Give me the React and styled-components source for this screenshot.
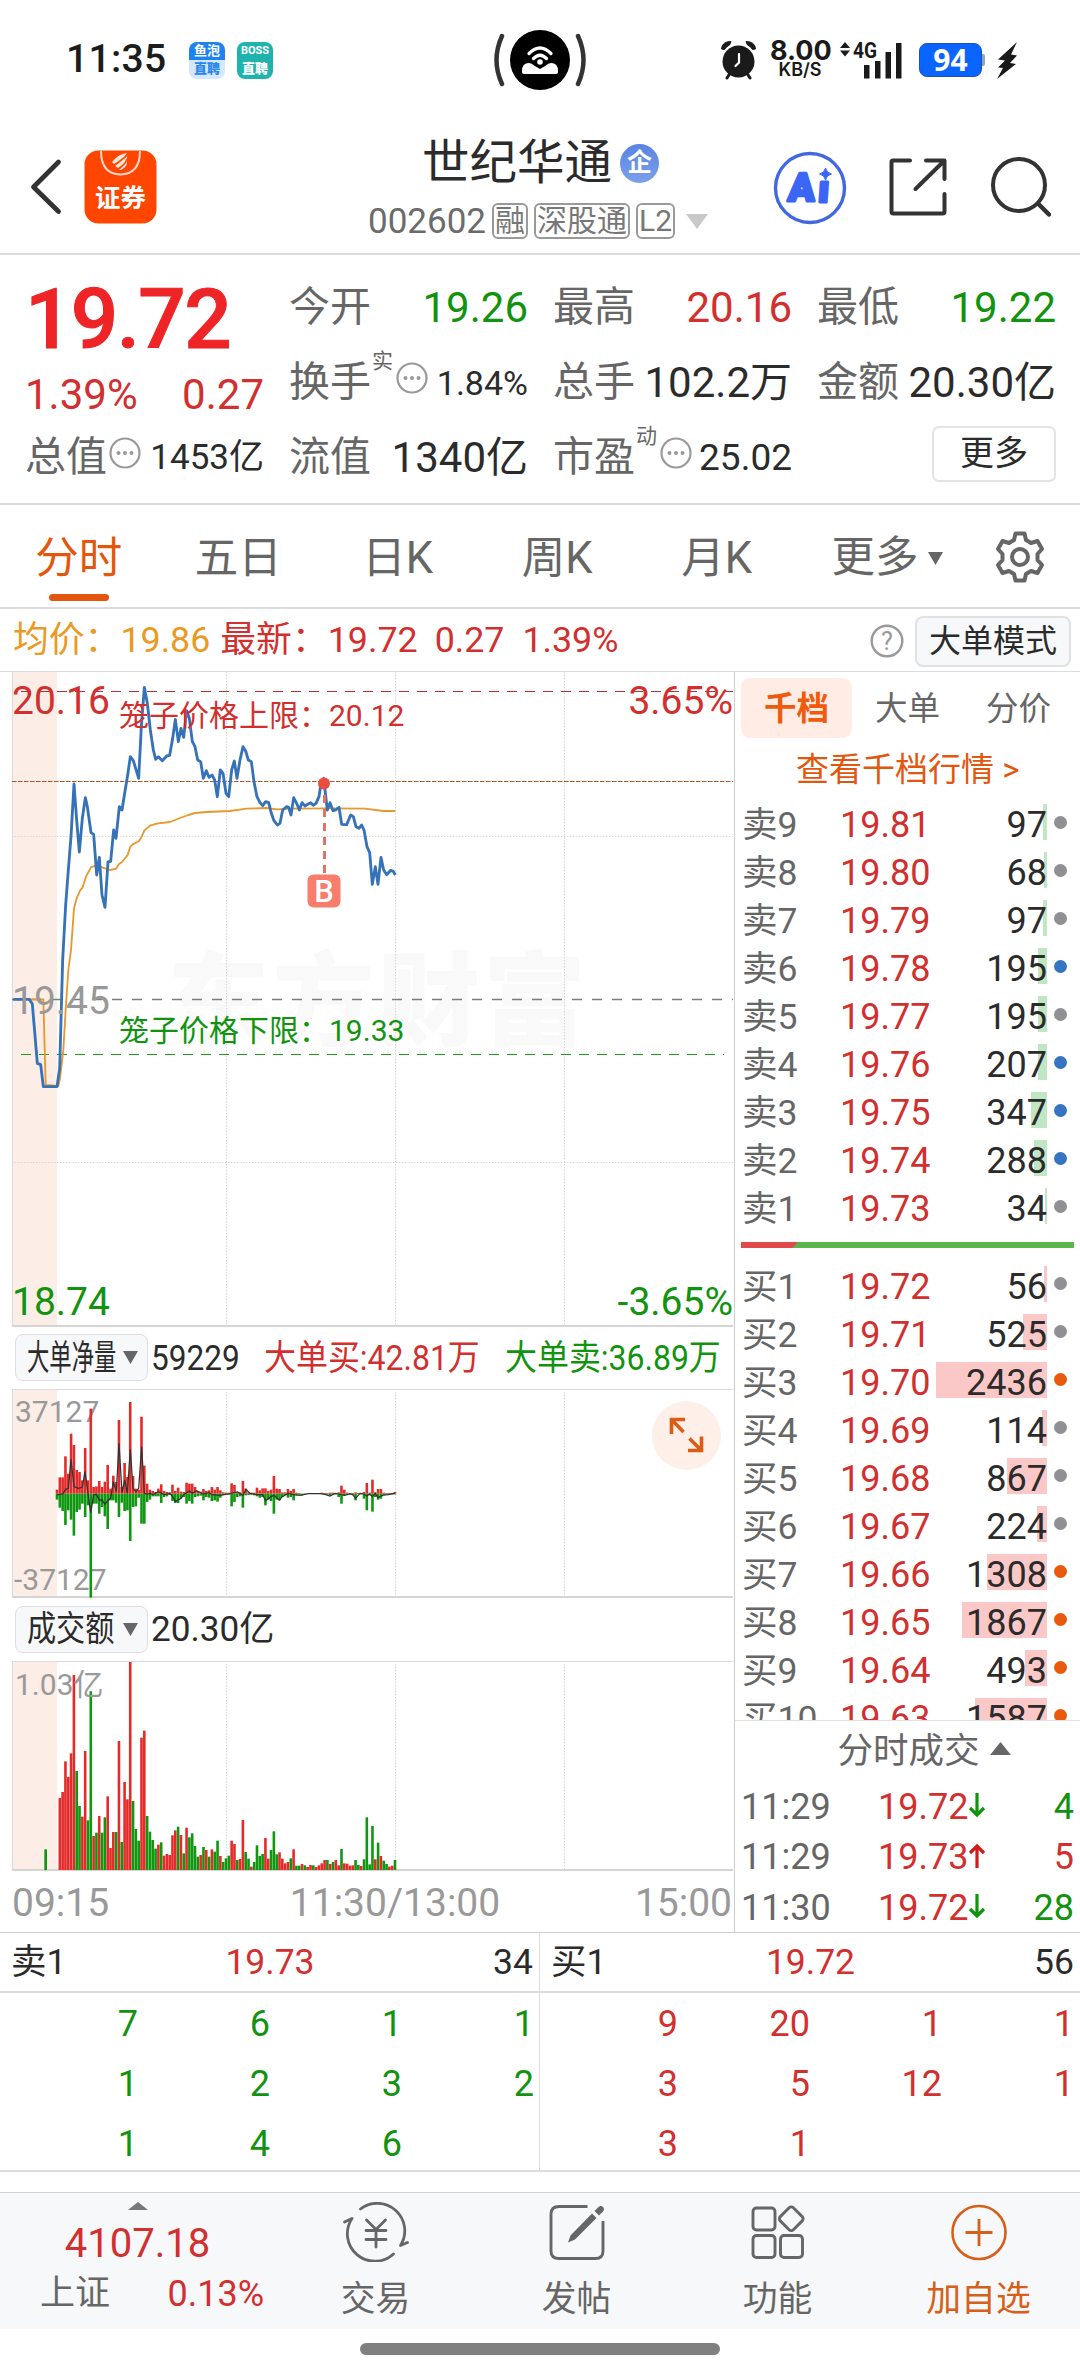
import React from 'react'
import styled, {createGlobalStyle} from "styled-components";

const RED = '#d22f2f';
const GREEN = '#12930f';
const GRAY = '#666';
const DARK = '#2b2b2b';
const ORANGE = '#e2570d';
const LINE = '#dcdcdc';

const GlobalStyle = createGlobalStyle`
    body{
      margin: 0;
      background-color: #fff;
      font-family: Roboto, "Noto Sans CJK SC", sans-serif;
      color: ${DARK};
    }
    *{
      box-sizing: border-box;
    }
    svg{
      display: block;
      flex: none;
    }
    svg text{
      font-family: Roboto, "Noto Sans CJK SC", sans-serif;
    }
`;

const Page = styled.div`
    width: 1080px;
    height: 2376px;
    overflow: hidden;
    display: flex;
    flex-flow: column nowrap;
    white-space: nowrap;
    line-height: 1;
`;

/* ---------- status bar ---------- */

const StatusBar = styled.div`
    height: 120px;
    flex: none;
    display: grid;
    grid-template-columns: 1fr auto 1fr;
    align-items: center;
    padding: 0 62px 0 62px;
`;
const StatusSide = styled.div`
    display: flex;
    align-items: center;
    justify-content: ${({end}) => end ? 'flex-end' : 'flex-start'};
`;
const Clock = styled.div`
    font-size: 39px;
    font-weight: 500;
    color: #1c1c1c;
    width: 123px;
    letter-spacing: 0.3px;
    margin: -2px 0 0 4px;
`;
const AppBadge = styled.div`
    width: 36px;
    height: 37px;
    border-radius: 8px;
    margin-right: 12px;
    background: ${({bg}) => bg};
    display: flex;
    flex-flow: column;
    align-items: center;
    justify-content: center;
    font-weight: 700;
    line-height: 18px;
    span{
      font-size: ${({top}) => top}px;
      color: #fff;
      height: 18px;
    }
    b{
      font-size: 13px;
      color: ${({fg}) => fg};
      height: 18px;
    }
`;
const Speed = styled.div`
    width: 60px;
    margin: -3px 10px 0 12px;
    font-family: Inter, sans-serif;
    text-align: center;
    font-weight: 700;
    color: #1a1a1a;
    div{
      font-size: 27px;
      line-height: 24px;
      height: 22px;
    }
    span{
      display: block;
      font-size: 18px;
      line-height: 18px;
      font-weight: 600;
    }
`;
const Battery = styled.div`
    width: 63px;
    height: 34px;
    margin: 0 3px 0 17px;
    border-radius: 8px;
    background-color: #0a64ff;
    border: 1px solid #1d52b5;
    color: #fff;
    font: 700 30px/31px "Noto Sans", sans-serif;
    text-align: center;
    position: relative;
    &:after{
      content: '';
      position: absolute;
      right: -4px;
      top: 10px;
      width: 3px;
      height: 12px;
      border-radius: 0 2px 2px 0;
      background-color: #8fa3c9;
    }
`;

/* ---------- header ---------- */

const Header = styled.div`
    height: 135px;
    flex: none;
    border-bottom: 2px solid ${LINE};
    display: flex;
    padding: 19px 29px 0 30px;
`;
const HeaderLeft = styled.div`
    display: flex;
    width: 336px;
    gap: 22px;
    padding-top: 11px;
`;
const HeaderTitle = styled.div`
    flex: 1;
`;
const TitleLine = styled.div`
    display: flex;
    align-items: center;
    font-size: 47.5px;
    line-height: 50px;
    height: 48px;
    padding-left: 56px;
`;
const Verified = styled.div`
    width: 39px;
    height: 39px;
    margin-left: 8px;
    border-radius: 50%;
    background: linear-gradient(#5a84e2, #7ba0ea);
    color: #fff;
    font-size: 25px;
    font-weight: 700;
    line-height: 37px;
    text-align: center;
`;
const CodeLine = styled.div`
    display: flex;
    align-items: center;
    height: 36px;
    margin-top: 16px;
    font-size: 35px;
    color: #6b6b6b;
    gap: 6px;
    padding-left: 2px;
`;
const Tag = styled.span`
    height: 36px;
    padding: 0 1px;
    border: 2px solid #999;
    border-radius: 6px;
    font-size: 30px;
    line-height: 32px;
    color: #777;
`;
const HeaderIcons = styled.div`
    display: flex;
    gap: 41px;
    padding-top: 12px;
`;

/* ---------- summary ---------- */

const Summary = styled.div`
    height: 250px;
    flex: none;
    border-bottom: 2px solid ${LINE};
    padding: 15px 23px 0 25px;
    display: grid;
    grid-template-columns: repeat(4, 239px);
    grid-template-rows: repeat(3, 75px);
    column-gap: 25px;
`;
const Cell = styled.div`
    display: flex;
    align-items: center;
    padding-top: ${({drop}) => drop || 0}px;
`;
const Label = styled.span`
    font-size: 41px;
    color: ${GRAY};
`;
const Sup = styled.span`
    align-self: flex-start;
    margin-top: 6px;
    font-size: 21px;
    color: ${GRAY};
    width: 23px;
    padding-left: 1px;
`;
const DotsIcon = styled.svg`
    margin: -10px 0 0 2px;
`;
const Value = styled.span`
    margin-left: ${({first}) => first ? '0' : 'auto'};
    font-size: ${({size}) => size || 42}px;
    color: ${({color}) => color || DARK};
`;
const BigPrice = styled.span`
    font-size: 83.5px;
    font-weight: 500;
    color: #ee2426;
    letter-spacing: -1.6px;
    -webkit-text-stroke: 1px #ee2426;
`;
const MoreButton = styled.div`
    margin-left: auto;
    width: 124px;
    height: 56px;
    margin-top: -7px;
    border: 2px solid #e4e4e4;
    border-radius: 7px;
    font-size: 34px;
    line-height: 51px;
    text-align: center;
`;

/* ---------- period tabs ---------- */

const Tabs = styled.div`
    height: 104px;
    flex: none;
    border-bottom: 2px solid ${LINE};
    display: flex;
    padding-right: 34px;
`;
const Tab = styled.div`
    width: 159.5px;
    height: 102px;
    display: flex;
    flex-flow: column;
    align-items: center;
    font-size: 43.5px;
    line-height: 107px;
    padding-right: 2px;
    color: ${({active}) => active ? ORANGE : GRAY};
    &:after{
      content: '';
      width: 60px;
      height: 7px;
      margin-top: -18px;
      border-radius: 4px;
      background-color: ${({active}) => active ? ORANGE : 'transparent'};
    }
`;
const MoreTab = styled.div`
    display: flex;
    align-items: center;
    gap: 9px;
    margin-left: 34px;
    font-size: 43.5px;
    color: ${GRAY};
    height: 106px;
`;
const GearBox = styled.div`
    margin-left: auto;
    padding-top: 25px;
`;

/* ---------- price line above chart ---------- */

const InfoBar = styled.div`
    height: 63px;
    flex: none;
    border-bottom: 1px solid ${LINE};
    display: flex;
    align-items: center;
    padding: 2px 9px 0 13px;
    font-size: 35.8px;
    color: ${RED};
`;
const InfoText = styled.span`
    margin-right: ${({gap}) => gap}px;
    color: ${({color}) => color || RED};
`;
const ModeButton = styled.div`
    width: 156px;
    height: 51px;
    margin-left: 11px;
    border: 2px solid #dfe1e5;
    border-radius: 8px;
    background-color: #f7f8fa;
    color: ${DARK};
    font-size: 32px;
    line-height: 47px;
    text-align: center;
`;

/* ---------- main area ---------- */

const Main = styled.div`
    height: 1261px;
    flex: none;
    display: flex;
    border-bottom: 1px solid #cfcfcf;
`;
const ChartSide = styled.div`
    width: 735px;
    border-right: 1px solid #cfcfcf;
`;
const Toolbar = styled.div`
    height: ${({height}) => height}px;
    display: flex;
    align-items: center;
    padding: 0 0 1px 15px;
`;
const Select = styled.div`
    width: 133px;
    height: 47px;
    border: 1px solid #dcdfe6;
    border-radius: 8px;
    background-color: #f7f8fa;
    display: flex;
    align-items: center;
    gap: 8px;
    padding-left: 11px;
    margin-right: 3px;
`;
/* text that is narrowed to fit a fixed slot */
const Fit = styled.span`
    display: block;
    width: ${({width}) => width}px;
    font-size: 35.5px;
    height: 40px;
    line-height: 41px;
    color: ${({color}) => color || DARK};
    transform: scaleX(${({scale}) => scale});
    transform-origin: left center;
`;
const TimeAxis = styled.div`
    height: 61px;
    display: grid;
    grid-template-columns: 1fr auto 1fr;
    align-items: center;
    padding: 3px 2px 0 12px;
    font-size: 39px;
    color: #999;
    span:last-child{
      text-align: right;
    }
    span:nth-child(2){
      padding-left: 46px;
    }
`;

/* ---------- order book ---------- */

const Book = styled.div`
    width: 345px;
    display: flex;
    flex-flow: column;
`;
const BookTabs = styled.div`
    display: flex;
    padding: 6px 6px 0;
`;
const BookTab = styled.div`
    flex: 1;
    height: 60px;
    border-radius: 9px;
    font-size: 32.5px;
    line-height: 62px;
    text-align: center;
    font-weight: ${({active}) => active ? 700 : 400};
    color: ${({active}) => active ? '#f05a0e' : GRAY};
    background-color: ${({active}) => active ? '#ffece4' : 'transparent'};
`;
const BookLink = styled.div`
    height: 62px;
    padding-left: 61px;
    font-size: 33px;
    line-height: 63px;
    color: ${ORANGE};
`;
const BookRow = styled.div`
    height: 48px;
    display: flex;
    align-items: center;
    padding-left: 7px;
    font-size: 36px;
    line-height: 48px;
`;
const Level = styled.span`
    width: 98px;
    padding-top: 2px;
    font-size: 35.5px;
    color: ${GRAY};
`;
const Price = styled.span`
    color: ${RED};
    width: 96px;
    padding-top: 2px;
`;
const Volume = styled.span`
    width: 111px;
    height: 48px;
    line-height: 50px;
    text-align: right;
    background: linear-gradient(${({tint}) => tint}, ${({tint}) => tint}) right 4px / ${({bar}) => bar}px 36px no-repeat;
`;
const Dot = styled.i`
    width: 13px;
    height: 13px;
    border-radius: 50%;
    margin: -4px 0 0 7px;
    background-color: ${({color}) => color};
`;
const Ratio = styled.div`
    height: 6px;
    margin: 10px 6px 14px;
    background: linear-gradient(135deg, #e04a4b 40px, #5bb54b 41px);
`;
const Bids = styled.div`
    height: 460px;
    overflow: hidden;
    border-bottom: 1px solid #e2e2e2;
`;
const TradesTitle = styled.div`
    height: 60px;
    display: flex;
    align-items: center;
    justify-content: center;
    gap: 10px;
    padding: 2px 0 0 33px;
    font-size: 35.5px;
    color: ${GRAY};
    svg{
      margin-top: -6px;
    }
`;
const Trade = styled.div`
    height: 50.7px;
    display: flex;
    align-items: center;
    padding: 2px 6px 0 6px;
    font-size: 36px;
    color: ${GRAY};
    svg{
      margin-top: -3px;
    }
`;
const TradeTime = styled.span`
    width: 137px;
`;
const TradePrice = styled.span`
    width: 90px;
    color: ${RED};
`;
const TradeSize = styled.span`
    margin-left: auto;
    color: ${({color}) => color};
`;

/* ---------- queue ---------- */

const Queue = styled.div`
    display: flex;
    height: 239px;
    flex: none;
    border-bottom: 2px solid ${LINE};
`;
const QueueSide = styled.div`
    width: 540px;
    border-right: ${({divider}) => divider ? '1px solid ' + LINE : 'none'};
`;
const QueueHead = styled.div`
    height: 60px;
    border-bottom: 2px solid ${LINE};
    display: grid;
    grid-template-columns: 1fr auto 1fr;
    align-items: center;
    padding: 2px 6px 0 11px;
    font-size: 35.5px;
    b{
      font-weight: 400;
      color: ${RED};
      padding-right: 4px;
    }
    span:last-child{
      text-align: right;
    }
`;
const QueueGrid = styled.div`
    display: grid;
    grid-template-columns: 138px 132px 132px 132px;
    grid-auto-rows: 60px;
    align-items: center;
    text-align: right;
    padding-top: 1px;
    font-size: 36px;
    color: ${({color}) => color};
`;

/* ---------- bottom nav ---------- */

const Nav = styled.div`
    height: 137px;
    flex: none;
    margin-top: 20px;
    border-top: 1px solid #cfd2d5;
    background-color: #f7f8fa;
    display: flex;
`;
const IndexBox = styled.div`
    width: 275px;
    display: flex;
    flex-flow: column;
    align-items: center;
    padding-top: 9px;
`;
const IndexValue = styled.div`
    font-size: 40px;
    line-height: 40px;
    margin-top: 14px;
    color: ${RED};
`;
const IndexRow = styled.div`
    width: 275px;
    margin-top: 12px;
    padding: 0 11px 0 40px;
    display: flex;
    justify-content: space-between;
    font-size: 35px;
    line-height: 36px;
    color: ${GRAY};
    span{
      color: ${RED};
      font-size: 36px;
    }
`;
const NavItem = styled.div`
    width: 201px;
    display: flex;
    flex-flow: column;
    align-items: center;
    padding-top: 9px;
    gap: 20px;
    font-size: 34.8px;
    color: ${({active}) => active ? '#d65f1a' : GRAY};
`;
const HomeBar = styled.div`
    width: 360px;
    height: 12px;
    margin: 14px auto 0;
    border-radius: 6px;
    background-color: #808080;
`;

/* ---------- data ---------- */

// chart drawings share one scale: 3 units per pixel
const STEP = 8.45;
const START = 171;

const PRICE = `40,1048 88,1048 97,1062 112,1240 122,1244 130,1310 171,1310 179,1255 188,930 197,765 205,660 213,560
222,402 230,510 238,606 247,505 256,443 262,470 273,548 281,553 290,675 298,622 306,735 315,772 324,636 332,634
341,540 348,565 358,470 366,480 374,430 383,375 391,320 400,332 416,385 424,230 433,112 442,160 451,240 460,300
467,328 475,320 487,332 500,318 509,316 518,265 526,208 535,275 543,235 551,262 560,182 568,205 577,275 585,290
593,330 602,335 610,385 619,362 627,382 636,375 644,390 652,440 661,360 669,370 678,430 686,440 695,360 703,333
711,385 720,330 729,290 737,303 745,330 754,335 762,395 771,440 780,458 788,467 797,455 806,458 814,490 822,512
832,525 840,520 848,480 860,470 866,472 873,495 881,443 890,460 898,480 906,458 915,468 924,462 932,458 940,466
948,460 957,440 963,400 971,385 982,480 990,458 999,482 1007,480 1017,472 1025,523 1040,524 1052,495 1060,500
1068,530 1077,535 1085,525 1092,540 1101,590 1109,608 1117,703 1126,650 1134,703 1143,622 1151,660 1160,674
1172,661 1180,664 1186,675`;

const AVERAGE = `88,1048 130,1048 137,1305 175,1308 180,1285 190,1200 197,1080 205,960 213,900 222,775 230,745
240,722 248,712 258,680 273,652 283,648 300,650 315,655 330,660 348,656 357,642 366,636 383,615 391,590 400,582
417,573 425,560 433,542 450,527 470,521 510,516 540,504 565,495 585,489 620,486 690,483 740,476 800,474 830,478
870,476 1000,475 1095,476 1150,483 1186,483`;

const NET = `171,525 188,522 197,508 205,505 213,418 222,500 235,505 247,502 255,455 264,520 272,578 281,525
289,523 298,540 306,540 315,553 323,542 332,535 340,485 349,515 357,370 366,518 374,480 382,520 391,388 399,505
408,515 416,505 425,380 433,520 441,522 450,520 460,524 475,515 492,524 509,520 517,528 526,545 543,535 551,524
568,513 577,520 590,512 610,522 627,518 636,524 661,526 685,522 712,516 729,526 738,508 750,520 771,524 788,524
797,542 813,530 822,526 838,540 847,530 864,520 881,524 900,526 925,521 960,521 975,523 990,528 1005,520
1017,522 1033,526 1050,522 1058,524 1067,535 1080,520 1092,522 1100,528 1109,522 1117,530 1126,520 1134,533
1150,525 1165,524 1185,520`;

const BIG_BUY = [12, 49, 49, 112, 60, 180, 146, 71, 65, 40, 137, 40, 255, 20, 22, 38, 20, 36, 86, 15, 54, 35, 221,
    20, 92, 50, 275, 53, 15, 12, 231, 84, 30, 12, 8, 5, 15, 28, 8, 5, 4, 27, 8, 18, 6, 5, 33, 30, 30, 20, 8, 6, 14,
    8, 10, 20, 12, 20, 10, 4, 3, 3, 31, 26, 5, 4, 38, 15, 4, 3, 3, 18, 10, 16, 16, 8, 12, 53, 15, 14, 4, 4, 14, 8,
    14, 3, 2, 0, 0, 0, 0, 0, 0, 0, 3, 2, 2, 3, 3, 2, 4, 24, 12, 3, 2, 2, 4, 2, 2, 5, 32, 3, 42, 4, 14, 14, 3, 2, 2,
    2, 5];
const BIG_SELL = [18, 42, 52, 94, 50, 78, 126, 55, 48, 30, 70, 35, 312, 30, 30, 60, 40, 68, 106, 20, 20, 27, 70,
    27, 52, 50, 142, 40, 38, 12, 90, 90, 25, 18, 8, 8, 8, 28, 10, 8, 4, 22, 28, 28, 14, 10, 30, 22, 30, 10, 8, 6,
    20, 10, 12, 22, 20, 24, 12, 4, 3, 3, 38, 25, 10, 8, 42, 5, 4, 3, 5, 8, 12, 10, 35, 18, 22, 60, 18, 20, 10, 4,
    12, 10, 20, 5, 3, 5, 3, 0, 0, 0, 0, 0, 0, 3, 3, 6, 3, 2, 10, 30, 6, 3, 2, 3, 20, 2, 2, 15, 50, 5, 54, 10, 18,
    15, 3, 2, 2, 2, 2];

// turnover per minute, sign is the direction
const TURNOVER = [0, 216, 234, 326, 279, 350, 585, -297, -192, 160, 357, -149, -536, 102, -112, 162, -112, -158,
    221, 66, 114, -114, 387, -84, 264, 212, 624, -207, -123, -88, 397, 418, -162, -115, -90, -64, 76, -83, 43, 48,
    45, 104, 119, -130, 105, -50, 127, -98, -110, -72, -40, 45, -69, 60, -40, 62, -55, -88, 42, -24, -35, -43, 88,
    78, -30, 33, 150, -54, -34, 10, -24, -74, -42, -48, 96, 34, -60, -116, -47, 53, 34, 20, 24, -35, 62, -13, -13,
    18, -14, 9, 15, -14, 9, 14, 20, 30, -30, 18, -24, 30, 14, -63, 20, 19, 13, 14, -30, -15, 12, -32, -158, -17,
    -132, 32, -82, 42, -28, -18, 10, 13, -30];

const BLUE_DOT = '#3474c0';
const GRAY_DOT = '#8f8f94';
const ORANGE_DOT = '#e8590c';

const asks = [
    ['卖9', '19.81', 97, GRAY_DOT],
    ['卖8', '19.80', 68, GRAY_DOT],
    ['卖7', '19.79', 97, GRAY_DOT],
    ['卖6', '19.78', 195, BLUE_DOT],
    ['卖5', '19.77', 195, GRAY_DOT],
    ['卖4', '19.76', 207, BLUE_DOT],
    ['卖3', '19.75', 347, BLUE_DOT],
    ['卖2', '19.74', 288, BLUE_DOT],
    ['卖1', '19.73', 34, GRAY_DOT],
];
const bids = [
    ['买1', '19.72', 56, GRAY_DOT],
    ['买2', '19.71', 525, GRAY_DOT],
    ['买3', '19.70', 2436, ORANGE_DOT],
    ['买4', '19.69', 114, GRAY_DOT],
    ['买5', '19.68', 867, GRAY_DOT],
    ['买6', '19.67', 224, GRAY_DOT],
    ['买7', '19.66', 1308, ORANGE_DOT],
    ['买8', '19.65', 1867, ORANGE_DOT],
    ['买9', '19.64', 493, ORANGE_DOT],
    ['买10', '19.63', 1587, ORANGE_DOT],
];
const trades = [
    ['11:29', '19.72', false, 4],
    ['11:29', '19.73', true, 5],
    ['11:30', '19.72', false, 28],
];

/* ---------- icons ---------- */

const Triangle = ({w, h, color, up}) => (
    <svg width={w} height={h} viewBox="0 0 10 10" preserveAspectRatio="none">
        <path d={up ? 'M0 10L5 0L10 10Z' : 'M0 0H10L5 10Z'} fill={color}/>
    </svg>
)

const Dots = () => (
    <DotsIcon width="32" height="32" viewBox="0 0 32 32">
        <circle cx="16" cy="16" r="14.500" fill="none" stroke="#999" strokeWidth="2.200"/>
        <circle cx="9.500" cy="16" r="2" fill="#999"/>
        <circle cx="16" cy="16" r="2" fill="#999"/>
        <circle cx="22.500" cy="16" r="2" fill="#999"/>
    </DotsIcon>
)

const CallIsland = () => (
    <svg width="96" height="62" viewBox="-2 0 96 62">
        <path d="M8 7Q-3 31 8 55M84 7Q95 31 84 55" fill="none" stroke="#333" strokeWidth="4.500" strokeLinecap="round"/>
        <circle cx="46" cy="31" r="30" fill="#000"/>
        <path d="M28 42Q28 34 35 34Q38 34 40 36.500L46 40L52 36.500Q54 34 57 34Q64 34 64 42V43Q64 45 62 45H30Q28 45 28 43Z" fill="#fff"/>
        <path d="M35 24.500Q46 13.500 57 24.500M39.500 29.500Q46 23 52.500 29.500" fill="none" stroke="#fff" strokeWidth="3.200" strokeLinecap="round"/>
        <circle cx="46" cy="33" r="2.800" fill="#fff"/>
    </svg>
)

const Alarm = () => (
    <svg width="38" height="40" viewBox="0 0 38 40">
        <circle cx="18.500" cy="21.500" r="16" fill="#1a1a1a"/>
        <path d="M1.500 9Q2 1.500 11 1.500L9.500 5Q6 6.500 4.500 9.500ZM35.500 9Q35 1.500 26 1.500L27.500 5Q31 6.500 32.500 9.500Z" fill="#1a1a1a" stroke="#1a1a1a" strokeLinejoin="round"/>
        <path d="M9.500 34L7 38M27.500 34L30 38" stroke="#1a1a1a" strokeWidth="3" strokeLinecap="round"/>
        <path d="M19 14V22.500L15.500 26" fill="none" stroke="#fff" strokeWidth="2.200" strokeLinecap="round"/>
    </svg>
)

const Signal = () => (
    <svg width="62" height="38" viewBox="0 0 62 38">
        <path d="M0 7L5 1L10 7ZM0 9.500H10L5 15.500Z" fill="#1a1a1a"/>
        <text x="13" y="16.500" fontSize="22" fontWeight="700" textLength="24" lengthAdjust="spacingAndGlyphs" fill="#1a1a1a">4G</text>
        <path d="M24 24H29.500V37.500H24ZM35 20H40.500V37.500H35ZM45.500 11H51V37.500H45.500ZM56 2H61.500V37.500H56Z" fill="#1a1a1a"/>
    </svg>
)

const BoltIcon = styled.svg`
    margin-left: 12px;
`;
const Bolt = () => (
    <BoltIcon width="21" height="37" viewBox="0 0 21 37">
        <path d="M20 0L1 17.500L8 18.500L1 25.500L6 26L0 37L19 22L13 21L20 13.500L14 12.500Z" fill="#1a1a1a"/>
    </BoltIcon>
)

const Brand = () => (
    <svg width="73" height="74" viewBox="0 0 73 74">
        <rect x="0.500" y="0.500" width="72" height="73" rx="14" fill="#ff4600"/>
        <path d="M17 1Q17 24 36.500 24.500Q56 24 56 1" fill="none" stroke="#ffd9c8" strokeWidth="2"/>
        <path d="M28 12Q34 4 43 3Q40 8 30 14ZM31 16Q40 9 43.500 6Q42 13 34 18ZM35 20Q42 14 43 11Q43.500 17 37 20Z" fill="#ffe6da"/>
        <text x="36.500" y="57" fontSize="25.500" fontWeight="700" textAnchor="middle" fill="#fff">证券</text>
    </svg>
)

const AiIcon = () => (
    <svg width="74" height="74" viewBox="0 0 74 74">
        <circle cx="37" cy="37" r="34.500" fill="none" stroke="#4168e0" strokeWidth="3.400"/>
        <g fill="#3b66f5" stroke="#3b66f5" strokeWidth="3" strokeLinejoin="round">
            <text x="15" y="50" fontSize="39" fontWeight="900" transform="skewX(-4) translate(3 0)">A</text>
            <text x="45" y="51" fontSize="38" fontWeight="900" transform="skewX(-4) translate(3 0)">ı</text>
        </g>
        <path d="M52.500 17Q53.500 22 58.500 23Q53.500 24 52.500 29Q51.500 24 46.500 23Q51.500 22 52.500 17Z" fill="#3b66f5" stroke="#3b66f5"/>
    </svg>
)

const HeaderSvg = styled.svg`
    margin-top: ${({top}) => top}px;
`;

const Share = () => (
    <HeaderSvg top={6} width="60" height="60" viewBox="0 0 60 60">
        <g fill="none" stroke="#333" strokeWidth="4" strokeLinecap="round" strokeLinejoin="round">
            <path d="M22 3.500H5Q3.500 3.500 3.500 5V54.500Q3.500 56.500 5.500 56.500H54.500Q56.500 56.500 56.500 54.500V37"/>
            <path d="M38 3.500H56.500V22M55 5L27.500 32"/>
        </g>
    </HeaderSvg>
)

const Search = () => (
    <HeaderSvg top={5} width="62" height="62" viewBox="0 0 62 62">
        <circle cx="30" cy="29" r="26" fill="none" stroke="#333" strokeWidth="4"/>
        <path d="M49.500 48L60 58.500" stroke="#333" strokeWidth="4.500" strokeLinecap="round"/>
    </HeaderSvg>
)

const Gear = () => (
    <svg width="52" height="54" viewBox="0 0 52 54">
        <g fill="none" stroke={GRAY} strokeWidth="4" strokeLinejoin="round">
            <path d="M21.500 3.500H30.500L32 10L37 13L43.500 11L48 19L43.500 24V30L48 35L43.500 43L37 41L32 44L30.500 50.500H21.500L20 44L15 41L8.500 43L4 35L8.500 30V24L4 19L8.500 11L15 13L20 10Z"/>
            <circle cx="26" cy="27" r="8"/>
        </g>
    </svg>
)

const HelpIcon = styled.svg`
    margin-left: auto;
`;
const Help = () => (
    <HelpIcon width="34" height="34" viewBox="0 0 34 34">
        <circle cx="17" cy="17" r="15.300" fill="none" stroke="#999" strokeWidth="2.400"/>
        <text x="17" y="26" fontSize="25" textAnchor="middle" fill="#999">?</text>
    </HelpIcon>
)

const Arrow = ({up}) => (
    <svg width="18" height="26" viewBox="0 0 18 26">
        <path d={up ? 'M9 25V3M2 10L9 3L16 10' : 'M9 1V23M2 16L9 23L16 16'} fill="none" stroke={up ? '#cf1b1b' : GREEN} strokeWidth="3.200"/>
    </svg>
)

const TradeIcon = () => (
    <svg width="66" height="60" viewBox="0 0 66 60">
        <g fill="none" stroke={GRAY} strokeWidth="2.800" strokeLinecap="round" strokeLinejoin="round">
            <path d="M17.500 7A27.500 27.500 0 0 1 57.500 43.500L64.500 40.500"/>
            <path d="M50.500 52A27.500 27.500 0 0 1 9 16.500L1.500 20"/>
            <path d="M23.500 18L33 27.500L42.500 18M33 27.500V45M23 28.500H43M23 37.500H43"/>
        </g>
    </svg>
)

const PostIcon = () => (
    <svg width="56" height="60" viewBox="0 0 56 60">
        <path d="M38.500 4.500H10Q2 4.500 2 12V49Q2 56.500 10 56.500H46.500Q54 56.500 54 49V19" fill="none" stroke={GRAY} strokeWidth="2.900"/>
        <path d="M43 11.500L47.500 16L26 37.500L19 40.500L21.500 33.500ZM45.500 9L49.500 5Q52 3 54 5Q56 7 54 9.500L50 13.500Z" fill={GRAY}/>
    </svg>
)

const AppsIcon = () => (
    <svg width="54" height="60" viewBox="0 0 54 60">
        <g fill="none" stroke={GRAY} strokeWidth="2.900">
            <rect x="2" y="6" width="22" height="22" rx="3.500"/>
            <rect x="2" y="33.500" width="22" height="22" rx="3.500"/>
            <rect x="29.500" y="33.500" width="22" height="22" rx="3.500"/>
            <rect x="31" y="7.500" width="18.500" height="18.500" rx="3" transform="rotate(45 40.250 16.750)"/>
        </g>
    </svg>
)

const AddIcon = () => (
    <svg width="58" height="60" viewBox="0 0 58 60">
        <circle cx="29" cy="30.500" r="26.500" fill="none" stroke="#d65f1a" strokeWidth="2.600"/>
        <path d="M29 17V44M15.500 30.500H42.500" stroke="#d65f1a" strokeWidth="2.800"/>
    </svg>
)

/* ---------- charts ---------- */

const Frame = ({height}) => (
    <g>
        <rect x="12" y="0" width="45" height={height} fill="#fcede6"/>
        <path d={`M226.500 0V${height}M395.500 0V${height}M564.500 0V${height}`} stroke="#d6d6d6" strokeDasharray="1.500 1.500"/>
        <path d={`M12.500 0V${height}`} stroke="#dadada"/>
        <path d={`M12 ${height - 1}H733`} stroke="#d5d5d5" strokeWidth="2"/>
    </g>
)

const PriceChart = () => (
    <svg width="734" height="655" viewBox="0 0 734 655">
        <text x="167" y="366" fontSize="102" fontWeight="900" letterSpacing="3.500" fill="#f9f9f9">东方财富</text>
        <Frame height={655}/>
        <path d="M12 164.500H733M12 490.500H733" stroke="#d6d6d6" strokeDasharray="1.500 1.500"/>
        <path d="M21 19.500H733" stroke="#bf3030" strokeWidth="1.200" strokeDasharray="10 8"/>
        <path d="M12 109.500H733" stroke="#ad5826" strokeWidth="1.100" strokeDasharray="4.500 1.500"/>
        <path d="M12 327.500H733" stroke="#7c7c7c" strokeWidth="1.600" strokeDasharray="10 10"/>
        <path d="M21 382.500H724" stroke="#239a20" strokeWidth="1.200" strokeDasharray="10 8"/>
        <g transform="translate(0 -22) scale(0.33333)" fill="none" strokeLinejoin="round">
            <polyline points={AVERAGE} stroke="#e8982c" strokeWidth="5.500"/>
            <polyline points={PRICE} stroke="#3672b8" strokeWidth="8.500"/>
        </g>
        <g fontSize="39">
            <text x="12" y="42" fill={RED}>20.16</text>
            <text x="12" y="342" fill="#999">19.45</text>
            <text x="12" y="643" fill={GREEN}>18.74</text>
            <text x="733" y="42" textAnchor="end" fill={RED}>3.65%</text>
            <text x="733" y="643" textAnchor="end" fill={GREEN}>-3.65%</text>
        </g>
        <g fontSize="30">
            <text x="119" y="54" fill={RED}>笼子价格上限：20.12</text>
            <text x="119" y="369" fill={GREEN}>笼子价格下限：19.33</text>
        </g>
        <path d="M324.500 123V201" stroke="#e07468" strokeWidth="3" strokeDasharray="8 6"/>
        <circle cx="324" cy="111.500" r="6" fill="#ea4d40"/>
        <rect x="307.500" y="202.500" width="33" height="33" rx="6" fill="#f87d6d"/>
        <text x="324" y="229.500" fontSize="31" fontWeight="500" textAnchor="middle" fill="#fff">B</text>
    </svg>
)

const BigOrderChart = () => (
    <svg width="734" height="209" viewBox="0 0 734 209">
        <Frame height={209}/>
        <path d="M12 0.500H733" stroke="#dcdcdc"/>
        <g fontSize="30" fill="#999">
            <text x="15" y="33">37127</text>
            <text x="14" y="201">-37127</text>
        </g>
        <g transform="translate(0 -69) scale(0.33333)">
            {BIG_BUY.map((v, i) => (
                <rect key={i} x={START + i * STEP - 3.9} y={521 - v} width="7.8" height={v} fill="#e52a2a"/>
            ))}
            {BIG_SELL.map((v, i) => (
                <rect key={i} x={START + i * STEP - 3.9} y={521} width="7.8" height={v} fill="#0f970f"/>
            ))}
            <polyline points={NET} fill="none" stroke="#333" strokeWidth="3.800"/>
        </g>
        <circle cx="686.500" cy="46.500" r="34.500" fill="#fef0e8"/>
        <g fill="none" stroke="#dc5c16" strokeWidth="3.600">
            <path d="M685 30.500H671.500V45M672 31L683.500 43"/>
            <path d="M688 61.500H701.500V47.500M701 61L689.500 49.500"/>
        </g>
    </svg>
)

const TurnoverChart = () => (
    <svg width="734" height="210" viewBox="0 0 734 210">
        <Frame height={210}/>
        <path d="M12 0.500H733" stroke="#dcdcdc"/>
        <g transform="translate(0 -61) scale(0.33333)">
            <rect x="133" y="748" width="8" height="62" fill="#0f970f"/>
            {TURNOVER.map((v, i) => (
                <rect key={i} x={START + i * STEP - 3.9} y={810 - Math.abs(v)} width="7.8" height={Math.abs(v)} fill={v > 0 ? '#e52a2a' : '#0f970f'}/>
            ))}
        </g>
        <text x="15" y="33.500" fontSize="30" fill="#999">1.03亿</text>
    </svg>
)

const BookLine = ({row, tint}) => {
    const [level, price, volume, dot] = row;
    return(
        <BookRow>
            <Level>{level}</Level>
            <Price>{price}</Price>
            <Volume tint={tint} bar={Math.max(1, Math.round(volume / 2436 * 111))}>{volume}</Volume>
            <Dot color={dot}/>
        </BookRow>
    )
}

const App = () => {
    return(
        <Page>
            <GlobalStyle/>
            <StatusBar>
                <StatusSide>
                    <Clock>11:35</Clock>
                    <AppBadge bg="linear-gradient(#1d83f2 50%, #d3e8fd 50%)" fg="#2a86e8" top={13}><span>鱼泡</span><b>直聘</b></AppBadge>
                    <AppBadge bg="#1fb3ae" fg="#fff" top={11}><span>BOSS</span><b>直聘</b></AppBadge>
                </StatusSide>
                <CallIsland/>
                <StatusSide end="true">
                    <Alarm/>
                    <Speed><div>8.00</div><span>KB/S</span></Speed>
                    <Signal/>
                    <Battery>94</Battery>
                    <Bolt/>
                </StatusSide>
            </StatusBar>

            <Header>
                <HeaderLeft>
                    <svg width="32" height="74" viewBox="0 0 32 74">
                        <path d="M28.500 12L3.500 37L28.500 61.500" fill="none" stroke="#333" strokeWidth="4.800" strokeLinecap="round" strokeLinejoin="round"/>
                    </svg>
                    <Brand/>
                </HeaderLeft>
                <HeaderTitle>
                    <TitleLine>世纪华通<Verified>企</Verified></TitleLine>
                    <CodeLine>
                        002602
                        <Tag>融</Tag>
                        <Tag>深股通</Tag>
                        <Tag>L2</Tag>
                        <svg width="32" height="16" viewBox="0 0 32 16"><path d="M5 1H27L16 16Z" fill="#c8c8c8"/></svg>
                    </CodeLine>
                </HeaderTitle>
                <HeaderIcons>
                    <AiIcon/>
                    <Share/>
                    <Search/>
                </HeaderIcons>
            </Header>

            <Summary>
                <Cell drop={24}><BigPrice>19.72</BigPrice></Cell>
                <Cell><Label>今开</Label><Value color={GREEN}>19.26</Value></Cell>
                <Cell><Label>最高</Label><Value color={RED}>20.16</Value></Cell>
                <Cell><Label>最低</Label><Value color={GREEN}>19.22</Value></Cell>
                <Cell drop={24}>
                    <Value color={RED} size={42} first="true">1.39%</Value>
                    <Value color={RED} size={42}>0.27</Value>
                </Cell>
                <Cell><Label>换手</Label><Sup>实</Sup><Dots/><Value size={34}>1.84%</Value></Cell>
                <Cell><Label>总手</Label><Value>102.2万</Value></Cell>
                <Cell><Label>金额</Label><Value>20.30亿</Value></Cell>
                <Cell><Label>总值</Label><Dots/><Value size={35}>1453亿</Value></Cell>
                <Cell><Label>流值</Label><Value>1340亿</Value></Cell>
                <Cell><Label>市盈</Label><Sup>动</Sup><Dots/><Value size={37}>25.02</Value></Cell>
                <Cell><MoreButton>更多</MoreButton></Cell>
            </Summary>

            <Tabs>
                <Tab active="true">分时</Tab>
                <Tab>五日</Tab>
                <Tab>日K</Tab>
                <Tab>周K</Tab>
                <Tab>月K</Tab>
                <MoreTab>更多<Triangle w={15} h={13} color={GRAY}/></MoreTab>
                <GearBox><Gear/></GearBox>
            </Tabs>

            <InfoBar>
                <InfoText color="#ea9a22" gap={10}>均价：19.86</InfoText>
                <InfoText gap={17}>最新：19.72</InfoText>
                <InfoText gap={18}>0.27</InfoText>
                <InfoText gap={0}>1.39%</InfoText>
                <Help/>
                <ModeButton>大单模式</ModeButton>
            </InfoBar>

            <Main>
                <ChartSide>
                    <PriceChart/>
                    <Toolbar height={62}>
                        <Select><Fit width={88} scale={0.63}>大单净量</Fit><Triangle w={15} h={13} color={GRAY}/></Select>
                        <Fit width={113} scale={0.89}>59229</Fit>
                        <Fit width={241} scale={0.9} color={RED}>大单买:42.81万</Fit>
                        <Fit width={213} scale={0.9} color={GREEN}>大单卖:36.89万</Fit>
                    </Toolbar>
                    <BigOrderChart/>
                    <Toolbar height={63}>
                        <Select><Fit width={88} scale={0.82}>成交额</Fit><Triangle w={15} h={13} color={GRAY}/></Select>
                        <Fit width={124} scale={0.99}>20.30亿</Fit>
                    </Toolbar>
                    <TurnoverChart/>
                    <TimeAxis>
                        <span>09:15</span>
                        <span>11:30/13:00</span>
                        <span>15:00</span>
                    </TimeAxis>
                </ChartSide>

                <Book>
                    <BookTabs>
                        <BookTab active="true">千档</BookTab>
                        <BookTab>大单</BookTab>
                        <BookTab>分价</BookTab>
                    </BookTabs>
                    <BookLink>查看千档行情 &gt;</BookLink>
                    {asks.map(row => <BookLine key={row[0]} row={row} tint="#c1e6c2"/>)}
                    <Ratio/>
                    <Bids>
                        {bids.map(row => <BookLine key={row[0]} row={row} tint="#fbc8c8"/>)}
                    </Bids>
                    <TradesTitle>分时成交<Triangle w={21} h={13} color={GRAY} up/></TradesTitle>
                    {trades.map(([time, price, up, size], i) => (
                        <Trade key={i}>
                            <TradeTime>{time}</TradeTime>
                            <TradePrice>{price}</TradePrice>
                            <Arrow up={up}/>
                            <TradeSize color={up ? RED : GREEN}>{size}</TradeSize>
                        </Trade>
                    ))}
                </Book>
            </Main>

            <Queue>
                <QueueSide divider="true">
                    <QueueHead><span>卖1</span><b>19.73</b><span>34</span></QueueHead>
                    <QueueGrid color={GREEN}>
                        {[7, 6, 1, 1, 1, 2, 3, 2, 1, 4, 6].map((n, i) => <span key={i}>{n}</span>)}
                    </QueueGrid>
                </QueueSide>
                <QueueSide>
                    <QueueHead><span>买1</span><b>19.72</b><span>56</span></QueueHead>
                    <QueueGrid color={RED}>
                        {[9, 20, 1, 1, 3, 5, 12, 1, 3, 1].map((n, i) => <span key={i}>{n}</span>)}
                    </QueueGrid>
                </QueueSide>
            </Queue>

            <Nav>
                <IndexBox>
                    <Triangle w={20} h={8} color="#777" up/>
                    <IndexValue>4107.18</IndexValue>
                    <IndexRow>上证<span>0.13%</span></IndexRow>
                </IndexBox>
                <NavItem><TradeIcon/>交易</NavItem>
                <NavItem><PostIcon/>发帖</NavItem>
                <NavItem><AppsIcon/>功能</NavItem>
                <NavItem active="true"><AddIcon/>加自选</NavItem>
            </Nav>
            <HomeBar/>
        </Page>
    )
}

export default App
